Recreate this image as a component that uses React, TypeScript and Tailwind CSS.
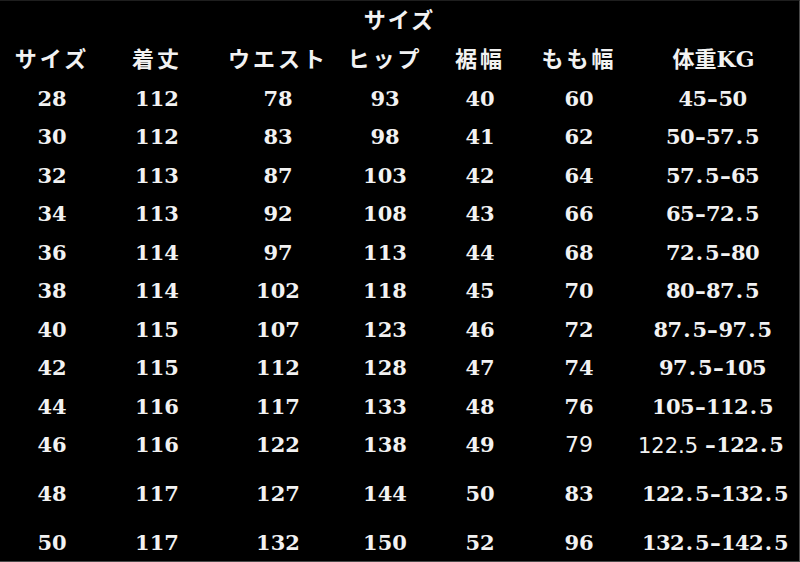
import React from "react";

const cols = "grid grid-cols-[104px_106px_136px_78px_112px_86px_177px]";
const font = { fontFamily: '"DejaVu Serif", "Noto Sans CJK JP", serif' };

function Mono({ text }: { text: string }) {
  return (
    <span className="inline-flex">
      {text.split("").map((ch, i) =>
        ch === "-" ? (
          <span key={i} className="inline-block w-[12px] text-center">
            <span className="inline-block scale-x-[1.3]">-</span>
          </span>
        ) : ch === "." ? (
          <span key={i} className="inline-block w-[11px] text-center">
            .
          </span>
        ) : (
          <span key={i} className="inline-block w-[14px] text-center">
            {ch}
          </span>
        )
      )}
    </span>
  );
}

const rows: [string, string, string, string, string, string, string][] = [
  ["28", "112", "78", "93", "40", "60", "45-50"],
  ["30", "112", "83", "98", "41", "62", "50-57.5"],
  ["32", "113", "87", "103", "42", "64", "57.5-65"],
  ["34", "113", "92", "108", "43", "66", "65-72.5"],
  ["36", "114", "97", "113", "44", "68", "72.5-80"],
  ["38", "114", "102", "118", "45", "70", "80-87.5"],
  ["40", "115", "107", "123", "46", "72", "87.5-97.5"],
  ["42", "115", "112", "128", "47", "74", "97.5-105"],
  ["44", "116", "117", "133", "48", "76", "105-112.5"],
];

export default function App() {
  return (
    <div
      className="w-[800px] h-[562px] bg-black text-[#f2f2f2] font-bold text-[21px] overflow-hidden flex flex-col border-t border-r border-b border-t-[#1e1e1e] border-r-[#4a4a4a] border-b-[#4a4a4a]"
      style={font}
    >
      <div className="h-[39px] flex items-center justify-center text-[22px] tracking-[2px]">
        サイズ
      </div>
      <div className={`${cols} h-[39px] items-center text-center text-[22px] tracking-[3px]`}>
        <div>サイズ</div>
        <div>着丈</div>
        <div>ウエスト</div>
        <div>ヒップ</div>
        <div>裾幅</div>
        <div>もも幅</div>
        <div className="tracking-normal pl-[6px]">体重KG</div>
      </div>
      {rows.map((r) => (
        <div key={r[0]} className={`${cols} h-[38.5px] items-center text-center`}>
          {r.slice(0, 6).map((c, i) => (
            <div key={i}>{c}</div>
          ))}
          <div className="flex justify-center pl-[4px]">
            <Mono text={r[6]} />
          </div>
        </div>
      ))}
      <div className={`${cols} h-[38.5px] items-center text-center`}>
        <div>46</div>
        <div>116</div>
        <div>122</div>
        <div>138</div>
        <div>49</div>
        <div
          className="font-normal text-[22px]"
          style={{ fontFamily: '"DejaVu Sans", sans-serif' }}
        >
          79
        </div>
        <div className="flex items-center justify-start pl-[16px]">
          <span
            className="font-normal text-[21px] mr-[6px] translate-y-[2px]"
            style={{ fontFamily: '"DejaVu Sans", sans-serif' }}
          >
            122.5
          </span>
          <Mono text="-122.5" />
        </div>
      </div>
      <div className={`${cols} h-[60px] items-center text-center`}>
        <div>48</div>
        <div>117</div>
        <div>127</div>
        <div>144</div>
        <div>50</div>
        <div>83</div>
        <div className="flex justify-start pl-[20px]">
          <Mono text="122.5-132.5" />
        </div>
      </div>
      <div className={`${cols} h-[37px] items-center text-center`}>
        <div>50</div>
        <div>117</div>
        <div>132</div>
        <div>150</div>
        <div>52</div>
        <div>96</div>
        <div className="flex justify-start pl-[20px]">
          <Mono text="132.5-142.5" />
        </div>
      </div>
    </div>
  );
}
